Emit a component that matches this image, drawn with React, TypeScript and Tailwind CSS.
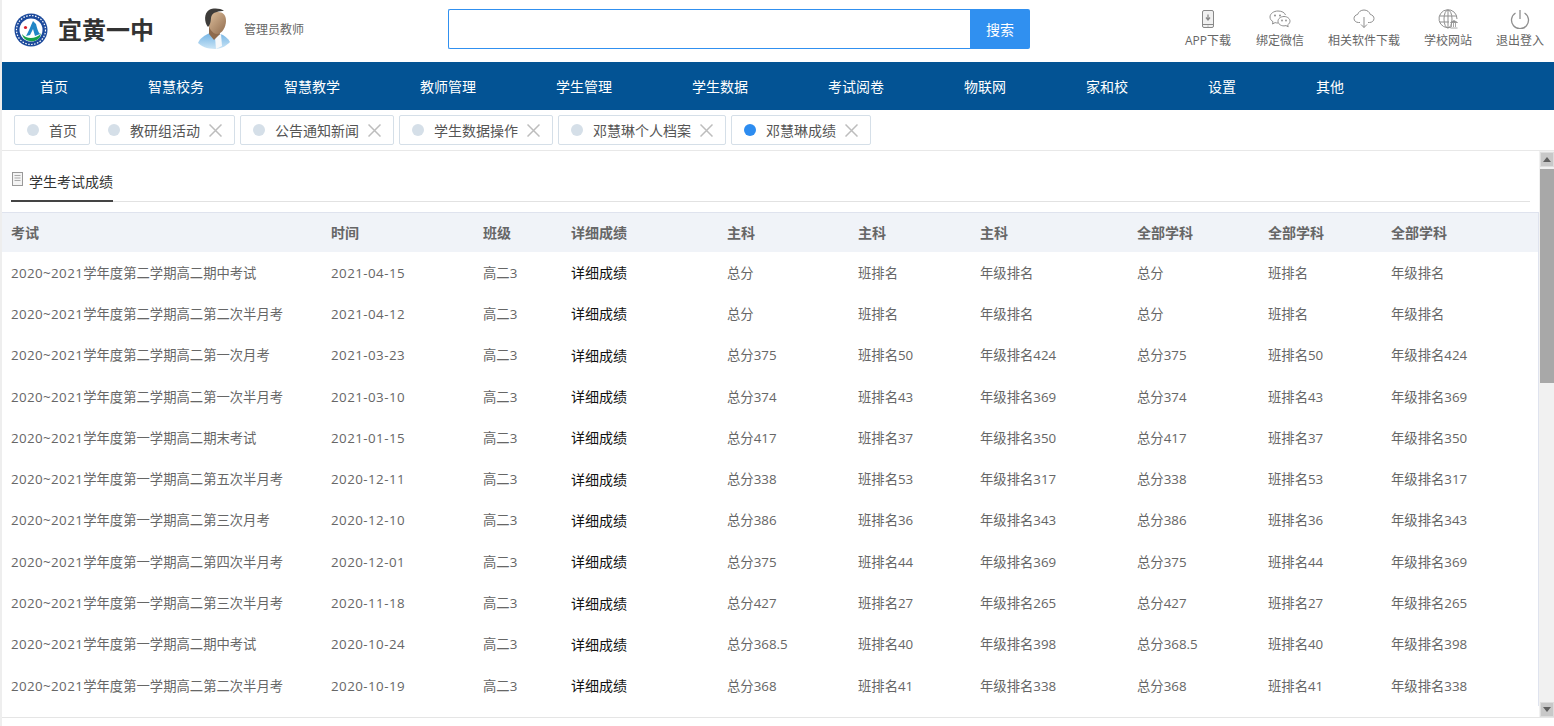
const FONT = '"Open Sans", "Noto Sans CJK SC", sans-serif';

const navItems = ["首页", "智慧校务", "智慧教学", "教师管理", "学生管理", "学生数据", "考试阅卷", "物联网", "家和校", "设置", "其他"];

const tabs = [
  { label: "首页", w: "w-[76px]", closable: false },
  { label: "教研组活动", w: "w-[140px]", closable: true },
  { label: "公告通知新闻", w: "w-[154px]", closable: true },
  { label: "学生数据操作", w: "w-[154px]", closable: true },
  { label: "邓慧琳个人档案", w: "w-[168px]", closable: true },
  { label: "邓慧琳成绩", w: "w-[140px]", closable: true, active: true },
];

const rows: [string, string, string, string, string, string][] = [
  ["第二学期高二期中考试", "2021-04-15", "高二3", "", "", ""],
  ["第二学期高二第二次半月考", "2021-04-12", "高二3", "", "", ""],
  ["第二学期高二第一次月考", "2021-03-23", "高二3", "375", "50", "424"],
  ["第二学期高二第一次半月考", "2021-03-10", "高二3", "374", "43", "369"],
  ["第一学期高二期末考试", "2021-01-15", "高二3", "417", "37", "350"],
  ["第一学期高二第五次半月考", "2020-12-11", "高二3", "338", "53", "317"],
  ["第一学期高二第三次月考", "2020-12-10", "高二3", "386", "36", "343"],
  ["第一学期高二第四次半月考", "2020-12-01", "高二3", "375", "44", "369"],
  ["第一学期高二第三次半月考", "2020-11-18", "高二3", "427", "27", "265"],
  ["第一学期高二期中考试", "2020-10-24", "高二3", "368.5", "40", "398"],
  ["第一学期高二第二次半月考", "2020-10-19", "高二3", "368", "41", "338"],
];

const headers = ["考试", "时间", "班级", "详细成绩", "主科", "主科", "主科", "全部学科", "全部学科", "全部学科"];
const colWidths = ["w-[320px]", "w-[152px]", "w-[88px]", "w-[156px]", "w-[131px]", "w-[122px]", "w-[157px]", "w-[131px]", "w-[123px]", "w-[156px]"];

function Logo() {
  return (
    <svg width="34" height="34" viewBox="0 0 34 34">
      <circle cx="17" cy="17" r="16.500" fill="#1c4a9c" />
      <circle cx="17" cy="17" r="14.500" fill="none" stroke="#fff" strokeWidth="1.200" strokeDasharray="1.500 1.500" />
      <circle cx="17" cy="17" r="11.500" fill="#fff" />
      <path d="M8 21c3 4 9 5 14 3 2-1 4-2 5-4l-1 4c-2 3-6 5-10 4-4 0-7-3-8-7z" fill="#17a04a" />
      <path d="M12 23c3-5 5-11 7-15l3 3c1 4 2 8 4 10l-5 2-2-7-3 6z" fill="#2286c6" />
      <circle cx="11.500" cy="14.500" r="1.600" fill="#d8202a" />
    </svg>
  );
}

function Avatar() {
  return (
    <svg width="34" height="41" viewBox="0 0 34 41">
      <defs>
        <linearGradient id="skin" x1="0" y1="0" x2="1" y2="1">
          <stop offset="0" stopColor="#e2c3a0" />
          <stop offset="1" stopColor="#8f6b4d" />
        </linearGradient>
        <linearGradient id="shirt" x1="0" y1="0" x2="0" y2="1">
          <stop offset="0" stopColor="#74b4e4" />
          <stop offset="1" stopColor="#cbe5f6" />
        </linearGradient>
      </defs>
      <path d="M1 35c2-5 7-8 12-10l10 1c4 1 8 4 10 8-3 3-8 7-15 7-8 0-14-3-17-6z" fill="url(#shirt)" />
      <path d="M18 29l6-3 1 12-6 3z" fill="#f6f8fa" />
      <path d="M12 18l10 4 1 4-6 6-5-6z" fill="#8e6a4c" />
      <path d="M10 10c0-5 5-6 11-6 5 0 8 3 8 9 0 6-4 13-9 13-5 0-10-8-10-16z" fill="url(#skin)" />
      <path d="M11 19C7 14 7 5 12 2c4-2 11-2 15 1-5 0-10 1-12 4-2 3 0 8-4 12z" fill="#3e3c3a" />
    </svg>
  );
}

function PhoneIcon() {
  return (
    <svg width="20" height="20" viewBox="0 0 20 20" fill="none" stroke="#888">
      <rect x="4.500" y="1.500" width="11" height="17" rx="1.500" fill="#f0f0f0" />
      <path d="M4.500 15.500h11" />
      <path d="M10 5.500v5M8 8.500l2 2.500 2-2.500" strokeWidth="1.300" />
      <circle cx="10" cy="17" r=".6" fill="#888" stroke="none" />
    </svg>
  );
}

function WechatIcon() {
  return (
    <svg width="22" height="20" viewBox="0 0 22 20" fill="none" stroke="#8f8f8f">
      <path d="M9 2C4.600 2 1 4.700 1 8c0 2 1.200 3.600 3 4.700L3.500 15l2.600-1.400c.9.300 1.800.4 2.900.4" />
      <path d="M15 7.500c-3.300 0-6 2.100-6 4.700s2.700 4.700 6 4.700c.7 0 1.400-.1 2-.3l2.200 1.200-.5-2c1.400-.9 2.300-2.200 2.300-3.600 0-2.600-2.700-4.700-6-4.700z" />
      <path d="M16.500 6C15.700 3.700 13 2 9 2" />
      <circle cx="6" cy="6.500" r="1" fill="#8f8f8f" stroke="none" />
      <circle cx="11" cy="6.500" r="1" fill="#8f8f8f" stroke="none" />
      <circle cx="13" cy="11.500" r=".9" fill="#8f8f8f" stroke="none" />
      <circle cx="17" cy="11.500" r=".9" fill="#8f8f8f" stroke="none" />
    </svg>
  );
}

function CloudIcon() {
  return (
    <svg width="22" height="20" viewBox="0 0 22 20" fill="none" stroke="#8f8f8f">
      <path d="M7 13.500H5.500C3 13.500 1 11.800 1 9.500c0-2 1.500-3.700 3.600-4C5.400 3 7.800 1 11 1s5.500 2 6.300 4.500c2.100.3 3.700 2 3.700 4 0 2.300-2 4-4.500 4H15" />
      <path d="M11 8v10.500M8 15.500l3 3 3-3" />
    </svg>
  );
}

function GlobeIcon() {
  return (
    <svg width="20" height="20" viewBox="0 0 20 20" fill="none" stroke="#8f8f8f">
      <path d="M13 18.200A9 9 0 1 1 19 10" />
      <ellipse cx="10" cy="10" rx="4" ry="9" />
      <path d="M1.500 7h17M1.500 13H11M10 1v18" />
      <path d="M12.500 19h7M13.500 18v-4M15.500 18v-4M17.500 18v-4M12.500 13.500l3.500-2 3.500 2z" fill="#8f8f8f" strokeWidth=".8" />
    </svg>
  );
}

function PowerIcon() {
  return (
    <svg width="20" height="20" viewBox="0 0 20 20" fill="none" stroke="#8f8f8f" strokeWidth="1.300">
      <path d="M10 1v9" />
      <path d="M5.500 4a8.500 8.500 0 1 0 9 0" />
    </svg>
  );
}

function DocIcon() {
  return (
    <svg width="13" height="15" viewBox="0 0 13 15" fill="#f4f4f4" stroke="#999">
      <rect x="1.500" y="0.500" width="10" height="13" />
      <path d="M3.500 3.500h6M3.500 6h6M3.500 8.500h6" stroke="#aaa" />
    </svg>
  );
}

function CloseIcon() {
  return (
    <svg width="13" height="13" viewBox="0 0 13 13" fill="none" stroke="#bdbdbd" strokeWidth="1.500" className="ml-[9px] shrink-0">
      <path d="M.5.500l12 12M12.500.500l-12 12" />
    </svg>
  );
}

const tools = [
  { label: "APP下载", icon: <PhoneIcon />, w: "w-[48px]" },
  { label: "绑定微信", icon: <WechatIcon />, w: "w-[48px]" },
  { label: "相关软件下载", icon: <CloudIcon />, w: "w-[72px]" },
  { label: "学校网站", icon: <GlobeIcon />, w: "w-[48px]" },
  { label: "退出登入", icon: <PowerIcon />, w: "w-[48px]" },
];

function Header() {
  return (
    <header className="flex h-[62px] items-start">
      <div className="ml-[12px] mt-[13px] shrink-0">
        <Logo />
      </div>
      <div className="ml-[10px] mt-[13px] w-[96px] shrink-0 text-[24px] leading-[34px] font-bold text-[#333]">宜黄一中</div>
      <div className="ml-[43px] mt-[8px] shrink-0">
        <Avatar />
      </div>
      <div className="ml-[13px] mt-[22px] w-[60px] shrink-0 text-[12px] leading-[16px] whitespace-nowrap text-[#666]">管理员教师</div>
      <div className="ml-[144px] mt-[9px] flex h-[40px] w-[582px] shrink-0">
        <div className="flex-1 rounded-l-[2px] border border-r-0 border-[#3090f0] bg-white" />
        <div className="flex w-[60px] items-center justify-center rounded-r-[2px] bg-[#3090f0] text-[14px] text-white">搜索</div>
      </div>
      <div className="ml-auto mr-[10px] mt-[9px] flex gap-[24px]">
        {tools.map((t) => (
          <div key={t.label} className={`flex flex-col items-center ${t.w}`}>
            <div className="flex h-[20px] items-center justify-center">{t.icon}</div>
            <div className="mt-[3px] text-[12px] leading-[18px] whitespace-nowrap text-[#666]">{t.label}</div>
          </div>
        ))}
      </div>
    </header>
  );
}

function Nav() {
  return (
    <nav className="flex h-[48px] items-center gap-[80px] bg-[#035394] pl-[38px] text-[14px] text-white">
      {navItems.map((n) => (
        <span key={n} className="whitespace-nowrap">{n}</span>
      ))}
    </nav>
  );
}

function Tabs() {
  return (
    <div className="flex h-[41px] items-start gap-[5px] border-b border-[#e8e8e8] pl-[12px] pt-[5px]">
      {tabs.map((t) => (
        <div key={t.label} className={`flex h-[30px] items-center rounded-[2px] border border-[#d5dfe8] pl-[12px] text-[14px] text-[#555] ${t.w}`}>
          <span className={`h-[12px] w-[12px] shrink-0 rounded-full ${t.active ? "bg-[#2d8cf0]" : "bg-[#d5dfe8]"}`} />
          <span className="ml-[10px] whitespace-nowrap">{t.label}</span>
          {t.closable && <CloseIcon />}
        </div>
      ))}
    </div>
  );
}

function Table() {
  return (
    <table className="w-[1536px] table-fixed border-collapse text-[13.33px]">
      <colgroup>
        {colWidths.map((w, i) => (
          <col key={i} className={w} />
        ))}
      </colgroup>
      <thead>
        <tr className="h-[39px] bg-[#f0f3f8] text-left text-[14px] text-[#666]">
          {headers.map((h, i) => (
            <th key={i} className="pl-[9px] font-bold">{h}</th>
          ))}
        </tr>
      </thead>
      <tbody className="text-[#666]">
        {rows.map((r) => {
          const [exam, date, cls, total, clsRank, gradeRank] = r;
          const cells = [`总分${total}`, `班排名${clsRank}`, `年级排名${gradeRank}`];
          return (
            <tr key={exam + date} className="h-[41.3px]">
              <td className="pt-[2px] pl-[9px] whitespace-nowrap">
                <span className="tracking-[0.4px]">2020~2021</span>
                学年度{exam}
              </td>
              <td className="pt-[2px] pl-[9px] tracking-[0.45px]">{date}</td>
              <td className="pt-[2px] pl-[9px]">{cls}</td>
              <td className="pl-[9px] text-[14px] text-[#111]">详细成绩</td>
              {cells.concat(cells).map((c, i) => (
                <td key={i} className="pt-[2px] pl-[9px] whitespace-nowrap">{c}</td>
              ))}
            </tr>
          );
        })}
      </tbody>
    </table>
  );
}

function Scrollbar() {
  return (
    <div className="flex w-[15px] shrink-0 flex-col items-center gap-[2px] bg-[#f1f1f1] pt-[1px] pl-[1px]">
      <div className="flex h-[15px] w-[14px] items-center justify-center border border-[#ddd] bg-[#c8c8c8]">
        <div className="h-0 w-0 border-x-[4px] border-b-[5px] border-x-transparent border-b-[#606060]" />
      </div>
      <div className="h-[214px] w-[14px] bg-[#a8a8a8]" />
      <div className="flex-1" />
      <div className="flex h-[15px] w-[14px] items-center justify-center border border-[#ddd] bg-[#c8c8c8]">
        <div className="h-0 w-0 border-x-[4px] border-t-[5px] border-x-transparent border-t-[#606060]" />
      </div>
    </div>
  );
}

export default function App() {
  return (
    <div className="flex h-[726px] w-[1554px] flex-col overflow-hidden border-l-2 border-[#eeeeee] bg-white" style={{ fontFamily: FONT }}>
      <Header />
      <Nav />
      <Tabs />
      <div className="flex h-[567px] border-b border-[#e5e5e5]">
        <div className="min-w-0 flex-1 overflow-hidden">
          <div className="h-[61px] pt-[17px] pr-[9px] pl-[9px]">
            <div className="h-[34px] border-b border-[#e2e2e2]">
              <div className="inline-flex h-[34px] items-start gap-[5px] border-b-2 border-[#444] text-[14px] leading-[28px] text-[#333]">
                <span className="mt-[4px]"><DocIcon /></span>
                <span>学生考试成绩</span>
              </div>
            </div>
          </div>
          <div className="border-t border-r border-[#dfe3ee]">
            <Table />
          </div>
        </div>
        <Scrollbar />
      </div>
    </div>
  );
}
